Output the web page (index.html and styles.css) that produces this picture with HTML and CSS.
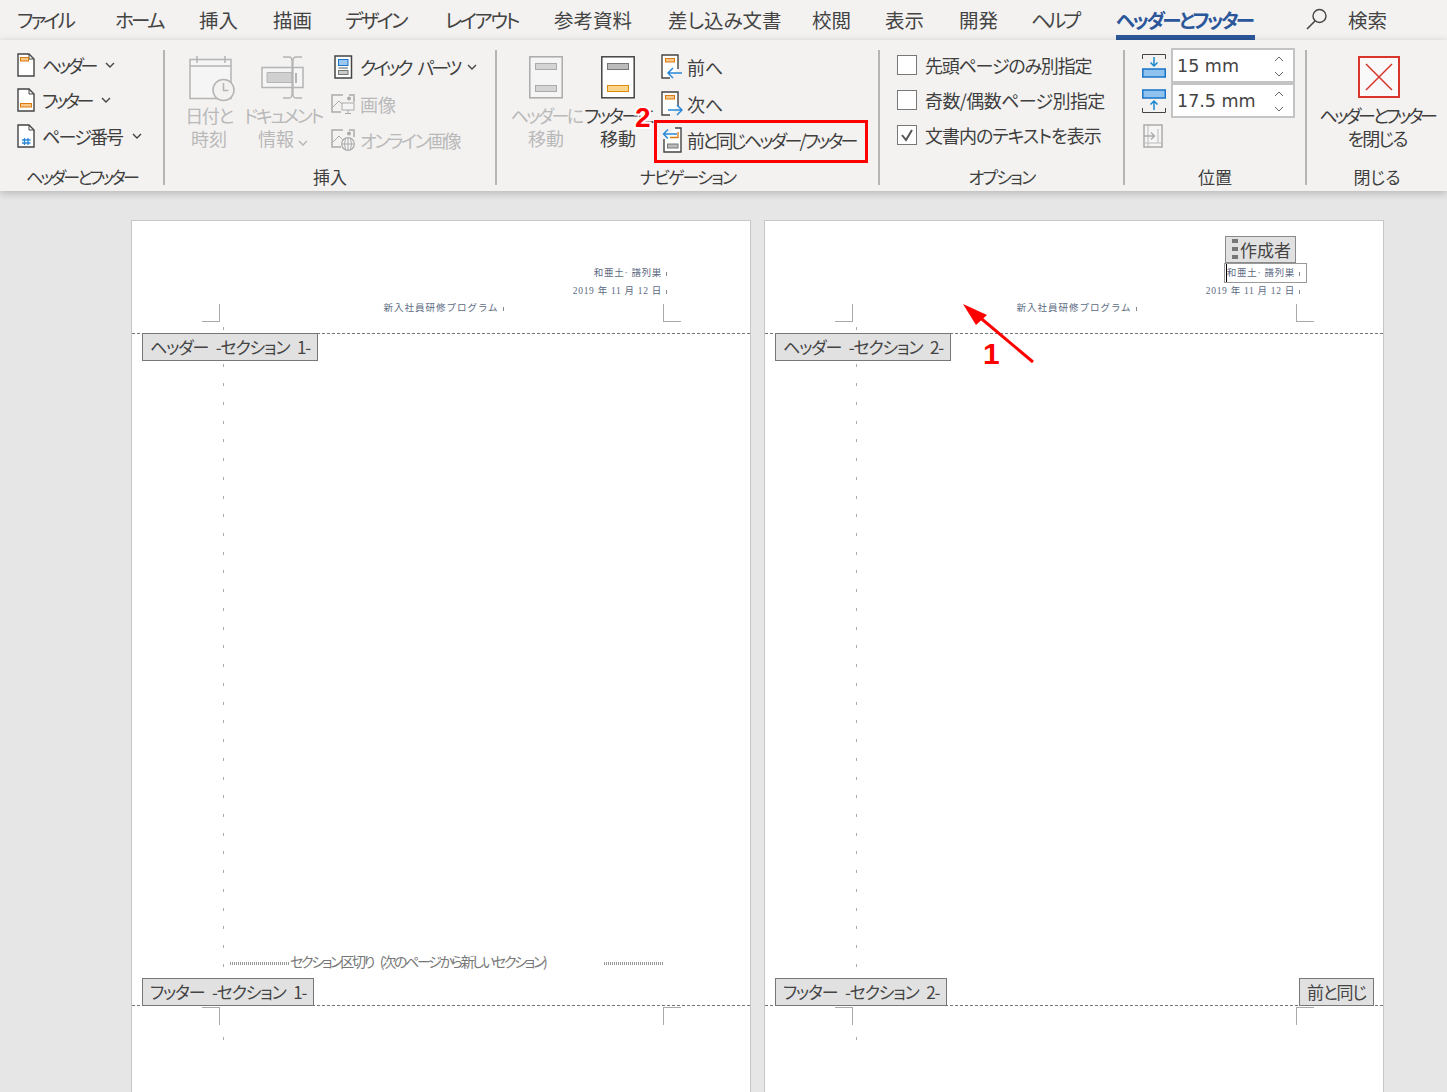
FILE: index.html
```html
<!DOCTYPE html>
<html lang="ja">
<head>
  <meta charset="UTF-8">
  <title>ヘッダーとフッター</title>
  <link rel="stylesheet" href="styles.css">
</head>
<body>
  <!-- タブ -->
  <nav class="tabs">
    <a class="tab ls-29">ファイル</a>
    <a class="tab ls-27">ホーム</a>
    <a class="tab">挿入</a>
    <a class="tab">描画</a>
    <a class="tab ls-27">デザイン</a>
    <a class="tab ls-24">レイアウト</a>
    <a class="tab">参考資料</a>
    <a class="tab">差し込み文書</a>
    <a class="tab">校閲</a>
    <a class="tab">表示</a>
    <a class="tab">開発</a>
    <a class="tab ls-29">ヘルプ</a>
    <a class="tab active ls-26">ヘッダーとフッター</a>
    <a class="search">
      <svg width="22" height="24" viewBox="0 0 22 24"><circle cx="13.5" cy="9" r="6.5" fill="none" stroke="#444" stroke-width="1.4"/><path d="M9 14 1 22" stroke="#444" stroke-width="1.6"/></svg>
      <span>検索</span>
    </a>
  </nav>

  <!-- リボン -->
  <section class="ribbon">
    <div class="group">
      <div class="group-body pad-first">
        <div class="small-col col-hf">
          <div class="small-row">
            <svg class="ico" width="18" height="24" viewBox="0 0 18 24"><path d="M1 1h11l5 5v17H1z" fill="#fff" stroke="#444" stroke-width="1.4"/><path d="M12 1v5h5" fill="none" stroke="#444"/><rect x="3.5" y="4.5" width="8" height="3.5" fill="#f8c888" stroke="#dc7a10"/></svg>
            <span class="ls-34">ヘッダー</span>
            <svg class="chev" width="10" height="6" viewBox="0 0 10 6"><path d="M1 1l4 4 4-4" fill="none" stroke="#444" stroke-width="1.4"/></svg>
          </div>
          <div class="small-row">
            <svg class="ico" width="18" height="24" viewBox="0 0 18 24"><path d="M1 1h11l5 5v17H1z" fill="#fff" stroke="#444" stroke-width="1.4"/><path d="M12 1v5h5" fill="none" stroke="#444"/><rect x="3.5" y="15.5" width="11" height="3.5" fill="#f8c888" stroke="#dc7a10"/></svg>
            <span class="ls-34">フッター</span>
            <svg class="chev" width="10" height="6" viewBox="0 0 10 6"><path d="M1 1l4 4 4-4" fill="none" stroke="#444" stroke-width="1.4"/></svg>
          </div>
          <div class="small-row">
            <svg class="ico" width="18" height="24" viewBox="0 0 18 24"><path d="M1 1h11l5 5v17H1z" fill="#fff" stroke="#444" stroke-width="1.4"/><path d="M12 1v5h5" fill="none" stroke="#444"/><path d="M7.5 14v7M11 14v7M5 16h8.5M5 19h8.5" stroke="#2b88d8" stroke-width="1.3" fill="none"/></svg>
            <span class="ls-18">ページ番号</span>
            <svg class="chev" width="10" height="6" viewBox="0 0 10 6"><path d="M1 1l4 4 4-4" fill="none" stroke="#444" stroke-width="1.4"/></svg>
          </div>
        </div>
      </div>
      <div class="group-label ls-29">ヘッダーとフッター</div>
    </div>

    <div class="group">
      <div class="group-body pad-insert">
        <div class="big-btn disabled w-date">
          <svg class="shift-date" width="46" height="46" viewBox="0 0 46 46"><path d="M1 3.500h41v39H1zM1 10h41M8 0v7M36 0v7" fill="#f5f5f5" stroke="#b4b4b4" stroke-width="1.500"/><circle cx="34.500" cy="34" r="10.500" fill="#f3f2f1" stroke="#b4b4b4" stroke-width="1.500"/><path d="M34.500 27v7.500h5" fill="none" stroke="#b4b4b4" stroke-width="1.500"/></svg>
          <div class="big-label"><span class="ls-15">日付と</span><br>時刻</div>
        </div>
        <div class="big-btn disabled w-doc">
          <svg width="44" height="44" viewBox="0 0 44 44"><path d="M1 11.500h41v20H1z" fill="#f5f5f5" stroke="#b4b4b4" stroke-width="1.500"/><path d="M6 16.500h25v10H6z" fill="#d0d0d0" stroke="#b4b4b4"/><path d="M35 17v10" stroke="#b4b4b4" stroke-width="2"/><path d="M22 1h6q3 0 3 4v33q0 4-3 4h-6M41 1h-6q-3 0-3 4v33q0 4 3 4h6" fill="none" stroke="#b4b4b4" stroke-width="1.300"/></svg>
          <div class="big-label"><span class="ls-23">ドキュメント</span><br>情報 <svg class="chev" width="10" height="6" viewBox="0 0 10 6"><path d="M1 1l4 4 4-4" fill="none" stroke="#b4b4b4" stroke-width="1.400"/></svg></div>
        </div>
        <div class="small-col col-insert">
          <div class="small-row">
            <svg class="ico" width="24" height="24" viewBox="0 0 24 24"><rect x="4" y="1" width="16.500" height="22" fill="#fff" stroke="#444" stroke-width="1.500"/><rect x="7.500" y="4.500" width="9.500" height="6" fill="#9cc7ee" stroke="#1a73c8"/><path d="M7.500 13h9.500" stroke="#777" stroke-width="1.200"/><rect x="7.500" y="15.500" width="9.500" height="4" fill="#ccc" stroke="#777"/></svg>
            <span class="ls-30 wide-space">クイック パーツ</span>
            <svg class="chev" width="10" height="6" viewBox="0 0 10 6"><path d="M1 1l4 4 4-4" fill="none" stroke="#444" stroke-width="1.400"/></svg>
          </div>
          <div class="small-row disabled">
            <svg class="ico" width="24" height="20" viewBox="0 0 24 20"><path d="M12 1H1v17h9M18 1h5v7" fill="none" stroke="#aaa" stroke-width="1.500"/><path d="M2 13l6-6 4 4" fill="none" stroke="#aaa"/><circle cx="18" cy="4.500" r="2" fill="#aaa"/><rect x="11" y="9" width="12" height="7" fill="#f5f5f5" stroke="#aaa"/><path d="M17 16v3M14 19.500h6" stroke="#aaa"/></svg>
            <span>画像</span>
          </div>
          <div class="small-row disabled">
            <svg class="ico" width="24" height="22" viewBox="0 0 24 22"><path d="M12 1H1v17h9M18 1h5v7" fill="none" stroke="#aaa" stroke-width="1.500"/><path d="M2 13l6-6 4 4" fill="none" stroke="#aaa"/><circle cx="18" cy="4.500" r="2" fill="#aaa"/><circle cx="17" cy="15" r="6.300" fill="#f5f5f5" stroke="#aaa" stroke-width="1.200"/><path d="M11 15h12M17 9v12M14.500 9.500q-1.800 5.500 0 11M19.500 9.500q1.800 5.500 0 11" fill="none" stroke="#aaa"/></svg>
            <span class="ls-24">オンライン画像</span>
          </div>
        </div>
      </div>
      <div class="group-label">挿入</div>
    </div>

    <div class="group">
      <div class="group-body pad-nav">
        <div class="big-btn disabled w-move">
          <svg width="34" height="44" viewBox="0 0 34 44"><rect x=".8" y=".8" width="32.400" height="41" fill="#f5f5f5" stroke="#aaa" stroke-width="1.500"/><rect x="6.500" y="7.500" width="21" height="6" fill="#d4d4d4" stroke="#aaa"/><rect x="6.500" y="29.500" width="21" height="6" fill="#d4d4d4" stroke="#aaa"/></svg>
          <div class="big-label"><span class="ls-26">ヘッダーに</span><br>移動</div>
        </div>
        <div class="big-btn w-move2">
          <svg width="34" height="44" viewBox="0 0 34 44"><rect x=".8" y=".8" width="32.400" height="41" fill="#fff" stroke="#444" stroke-width="1.500"/><rect x="6.500" y="7.500" width="21" height="6" fill="#bbb" stroke="#777"/><rect x="6.500" y="29.500" width="21" height="6" fill="#fbd58c" stroke="#e08a10"/></svg>
          <div class="big-label"><span class="ls-24">フッターに</span><br>移動</div>
        </div>
        <div class="small-col col-nav">
          <div class="small-row">
            <svg class="ico" width="22" height="26" viewBox="0 0 22 26"><path d="M9 24H1V1h16v14" fill="#fff" stroke="#444" stroke-width="1.400"/><rect x="4.500" y="4.500" width="9" height="3.500" fill="#f8c888" stroke="#dc7a10"/><path d="M21 19H7M12 14l-5 5 5 5" fill="none" stroke="#2b88d8" stroke-width="1.500"/></svg>
            <span>前へ</span>
          </div>
          <div class="small-row">
            <svg class="ico" width="22" height="26" viewBox="0 0 22 26"><path d="M9 24H1V1h16v14" fill="#fff" stroke="#444" stroke-width="1.400"/><rect x="4.500" y="4.500" width="9" height="3.500" fill="#f8c888" stroke="#dc7a10"/><path d="M7 19h14M16 14l5 5-5 5" fill="none" stroke="#2b88d8" stroke-width="1.500"/></svg>
            <span>次へ</span>
          </div>
          <div class="small-row">
            <svg class="ico" width="22" height="26" viewBox="0 0 22 26"><path d="M3 12v13h17V1h-6" fill="#fff" stroke="#444" stroke-width="1.400"/><path d="M16 7H3M7 2.500 2.500 7 7 11.500" fill="none" stroke="#2b88d8" stroke-width="1.500"/><path d="M9 10.500h8V5" fill="none" stroke="#dc7a10" stroke-width="1.300"/><rect x="6.500" y="17" width="10.500" height="4" fill="#bbb" stroke="#777"/></svg>
            <span class="ls-27">前と同じヘッダー/フッター</span>
          </div>
        </div>
      </div>
      <div class="group-label ls-18">ナビゲーション</div>
    </div>

    <div class="group">
      <div class="group-body pad-opt">
        <div class="small-col col-opt">
          <label class="check-row"><span class="check"></span><span class="ls-12">先頭ページのみ別指定</span></label>
          <label class="check-row"><span class="check"></span><span class="ls-06">奇数/偶数ページ別指定</span></label>
          <label class="check-row"><span class="check"><svg width="18" height="18" viewBox="0 0 18 18"><path d="M4 9l4 5 6-10" fill="none" stroke="#555" stroke-width="2"/></svg></span><span class="ls-10">文書内のテキストを表示</span></label>
        </div>
      </div>
      <div class="group-label ls-18">オプション</div>
    </div>

    <div class="group">
      <div class="group-body pad-pos">
        <div class="pos-grid">
          <svg width="24" height="24" viewBox="0 0 24 24"><path d="M.5 5V.5h23V5" fill="none" stroke="#444"/><path d="M12 3v9M8.500 8.500 12 12l3.500-3.500" fill="none" stroke="#1a86d0" stroke-width="1.500"/><rect x=".8" y="15" width="22.500" height="8" fill="#8fc2ee" stroke="#1a73c8" stroke-width="1.500"/></svg>
          <div class="spin"><span>15 mm</span><div class="spin-btns"><svg width="10" height="6" viewBox="0 0 10 6"><path d="M1 5l4-4 4 4" fill="none" stroke="#666"/></svg><svg width="10" height="6" viewBox="0 0 10 6"><path d="M1 1l4 4 4-4" fill="none" stroke="#666"/></svg></div></div>
          <svg width="24" height="24" viewBox="0 0 24 24"><rect x=".8" y="1" width="22.500" height="8" fill="#8fc2ee" stroke="#1a73c8" stroke-width="1.500"/><path d="M12 21v-9M8.500 15.500 12 12l3.500 3.500" fill="none" stroke="#1a86d0" stroke-width="1.500"/><path d="M.5 19v4.500h23V19" fill="none" stroke="#444"/></svg>
          <div class="spin"><span>17.5 mm</span><div class="spin-btns"><svg width="10" height="6" viewBox="0 0 10 6"><path d="M1 5l4-4 4 4" fill="none" stroke="#666"/></svg><svg width="10" height="6" viewBox="0 0 10 6"><path d="M1 1l4 4 4-4" fill="none" stroke="#666"/></svg></div></div>
          <svg class="align-ico" width="20" height="24" viewBox="0 0 20 24"><rect x="1" y="1" width="18" height="22" fill="#f5f5f5" stroke="#aaa" stroke-width="1.500"/><path d="M5 1v22M1 19h18M15 5v14" stroke="#bbb" fill="none"/><path d="M1 12h10M8 8.500l3.500 3.500L8 15.500" fill="none" stroke="#aaa" stroke-width="1.300"/></svg>
        </div>
      </div>
      <div class="group-label">位置</div>
    </div>

    <div class="group last">
      <div class="group-body">
        <div class="big-btn w-close">
          <svg class="shift-close" width="42" height="44" viewBox="0 0 42 44"><rect x="1" y="1" width="40" height="40" fill="#f9f9f9" stroke="#d9352a" stroke-width="2"/><path d="M8 8l26 26M34 8 8 34" stroke="#d9352a" stroke-width="1.500"/></svg>
          <div class="big-label"><span class="ls-33">ヘッダーとフッター</span><br><span class="ls-18">を閉じる</span></div>
        </div>
      </div>
      <div class="group-label">閉じる</div>
    </div>
  </section>

  <!-- 文書 -->
  <main class="canvas">
    <article class="page">
      <div class="page-head">
        <p class="doc-line right">和亜土· 譜列巣</p>
        <p class="doc-line right">2019 年 11 月 12 日</p>
        <p class="doc-line center">新入社員研修プログラム</p>
      </div>
      <div class="page-body">
        <div class="tag">ヘッダー -セクション 1-</div>
        <div class="break-row">
          <i class="dots"></i>
          <span>セクション区切り (次のページから新しいセクション)</span>
          <i class="dots"></i>
        </div>
        <div class="foot-tags">
          <div class="tag">フッター -セクション 1-</div>
        </div>
      </div>
      <i class="para-marks"></i>
      <i class="para-mark-foot"></i>
      <i class="crop tl"></i><i class="crop tr"></i><i class="crop bl"></i><i class="crop br"></i>
    </article>

    <article class="page">
      <div class="page-head">
        <p class="doc-line right boxed"><span class="author-box"><span class="caret">和亜土· 譜列巣</span></span></p>
        <p class="doc-line right">2019 年 11 月 12 日</p>
        <p class="doc-line center">新入社員研修プログラム</p>
      </div>
      <div class="page-body">
        <div class="tag">ヘッダー -セクション 2-</div>
        <div class="foot-tags">
          <div class="tag">フッター -セクション 2-</div>
          <div class="tag">前と同じ</div>
        </div>
      </div>
      <div class="author-tag"><i class="grip"></i>作成者</div>
      <i class="para-marks"></i>
      <i class="para-mark-foot"></i>
      <i class="crop tl"></i><i class="crop tr"></i><i class="crop bl"></i><i class="crop br"></i>
    </article>
  </main>

  <!-- 注釈 -->
  <div class="red-box"></div>
  <div class="num num-two">2</div>
  <div class="num num-one">1</div>
  <svg class="arrow" width="80" height="66" viewBox="0 0 80 66"><path d="M70 58 14 11" stroke="#f00" stroke-width="3"/><path d="M0 0 24 11 13 21z" fill="#f00"/></svg>
</body>
</html>
```

FILE: styles.css
```css
/* Reset */
* {
  margin: 0;
  padding: 0;
  box-sizing: border-box;
}

html, body {
  height: 1092px;
  overflow: hidden;
}

body {
  position: relative;
  display: flex;
  flex-direction: column;
  font-family: "Noto Sans CJK JP", sans-serif;
  font-feature-settings: "palt";
  font-size: 18px;
  color: #3f3f3f;
  background-color: #e6e6e6;
}

/* Kana in the original UI font is much narrower */
.ls-06 { letter-spacing: -0.6px; }
.ls-10 { letter-spacing: -1px; }
.ls-12 { letter-spacing: -1.2px; }
.ls-15 { letter-spacing: -1.5px; }
.ls-18 { letter-spacing: -1.8px; }
.ls-23 { letter-spacing: -2.3px; }
.ls-24 { letter-spacing: -2.4px; }
.ls-26 { letter-spacing: -2.6px; }
.ls-27 { letter-spacing: -2.7px; }
.ls-29 { letter-spacing: -2.9px; }
.ls-30 { letter-spacing: -3px; }
.ls-33 { letter-spacing: -3.3px; }
.ls-34 { letter-spacing: -3.4px; }

.wide-space { word-spacing: 6px; }

/* Tabs */
.tabs {
  display: grid;
  grid-template-columns: 98px 84px 74px 72px 100px 109px 114px 144px 73px 74px 72px 85px 139px auto;
  justify-content: start;
  height: 40px;
  padding-left: 17px;
  background-color: #f3f2f1;
}

.tab {
  font-size: 19.500px;
  line-height: 40px;
  white-space: nowrap;
  color: #444;
}

.tab.active {
  font-weight: 700;
  color: #2b579a;
  box-shadow: inset 0 -5px 0 #2b579a;
}

.search {
  display: flex;
  align-items: center;
  gap: 20px;
  margin-left: 51px;
  padding-bottom: 2px;
  font-size: 19.500px;
  color: #444;
}

/* Ribbon */
.ribbon {
  display: grid;
  grid-template-columns: 165px 332px 383px 245px 182px 140px;
  height: 151px;
  padding-top: 10px;
  background-color: #f3f2f1;
  box-shadow: 0 2px 8px rgba(0, 0, 0, 0.22);
  position: relative;
  z-index: 1;
}

.group {
  display: flex;
  flex-direction: column;
  height: 135px;
  border-right: 2px solid #b7b5b3;
}

.group.last {
  border-right: none;
}

.group-body {
  display: flex;
  flex: 1;
  min-height: 0;
}

.group-label {
  height: 24px;
  margin-bottom: -4px;
  font-size: 17px;
  line-height: 24px;
  text-align: center;
  white-space: nowrap;
}

.pad-first { padding-left: 17px; }
.pad-insert { padding-left: 14px; }
.pad-nav { padding-left: 9px; }
.pad-opt { padding-left: 17px; }
.pad-pos { padding-left: 17px; }

.disabled {
  color: #b9b9b9;
}

.big-btn {
  display: flex;
  flex-direction: column;
  align-items: center;
  flex: none;
  padding-top: 6px;
  font-size: 18px;
  line-height: 23px;
  text-align: center;
  white-space: nowrap;
}

.big-label {
  margin-top: 4px;
}

.shift-date {
  margin: 0 -3px -2px 3px;
}

.shift-close {
  margin-left: 3px;
}

.w-date { width: 60px; }
.w-doc { width: 84px; margin-left: 2px; }
.w-move { width: 80px; }
.w-move2 { width: 64px; }
.w-close { width: 140px; }

.small-col {
  display: flex;
  flex-direction: column;
}

.col-hf { margin-top: -3px; }
.col-insert { margin-left: 6px; margin-top: -1px; }
.col-nav { margin-left: 11px; margin-top: -1px; }
.col-opt { margin-top: -3px; }

.small-row {
  display: flex;
  align-items: center;
  height: 36.500px;
  white-space: nowrap;
  font-size: 18px;
}

.col-hf .small-row { height: 35.5px; gap: 7px; }
.col-insert .small-row { gap: 5px; }
.col-nav .small-row { gap: 4px; }

.chev {
  flex: none;
}

.small-row .chev {
  margin-left: 3px;
}

.ico {
  flex: none;
}

.check-row {
  display: flex;
  align-items: center;
  gap: 8px;
  height: 35px;
  white-space: nowrap;
}

.check {
  display: flex;
  align-items: center;
  justify-content: center;
  width: 20px;
  height: 20px;
  border: 1px solid #777;
  background-color: #fff;
}

.pos-grid {
  display: grid;
  grid-template-columns: 24px 124px;
  grid-auto-rows: 35px;
  column-gap: 5px;
  align-items: center;
  margin-top: -2px;
}

.spin {
  display: flex;
  align-items: center;
  justify-content: space-between;
  height: 35px;
  padding: 1px 9px 0 4px;
  border: 2px solid #c4c4c4;
  background-color: #fff;
  font-family: "DejaVu Sans", sans-serif;
  font-size: 17.5px;
  color: #444;
}

.spin-btns {
  display: flex;
  flex-direction: column;
  gap: 9px;
}

.align-ico {
  margin-left: 1px;
}

/* Document */
.canvas {
  display: flex;
  flex: 1;
  gap: 13px;
  padding: 29px 0 0 131px;
  min-height: 0;
}

.page {
  position: relative;
  width: 620px;
  background-color: #fff;
  border: 1px solid #c6c6c6;
  border-bottom: none;
}

.page-head {
  height: 113px;
  padding: 44px 83px 0 88px;
  border-bottom: 1px dashed #777;
}

.doc-line {
  height: 17.500px;
  font-family: "Liberation Serif", "Noto Sans CJK JP", serif;
  font-feature-settings: normal;
  font-size: 9.500px;
  letter-spacing: 0.7px;
  line-height: 17.500px;
  color: #5b6a82;
  white-space: nowrap;
}

.doc-line.center {
  letter-spacing: 1px;
  text-align: center;
}

.doc-line::after,
.caret::after {
  content: "";
  display: inline-block;
  width: 2px;
  height: 4px;
  margin-left: 2px;
  border-right: 1px solid #888;
}

.doc-line.right {
  text-align: right;
}

.doc-line.boxed::after {
  display: none;
}

.author-box {
  display: inline-block;
  height: 20px;
  margin: -2px -7px 0 0;
  padding: 0 6px 0 1px;
  border: 1px solid #999;
  line-height: 18px;
  vertical-align: top;
  background-color: #fff;
}

.caret {
  display: inline-block;
  height: 18px;
  border-left: 1.500px solid #000;
}

.page-body {
  display: flex;
  flex-direction: column;
  align-items: flex-start;
  height: 672px;
  padding: 0 9px 0 10px;
  border-bottom: 1px dashed #777;
}

.tag {
  position: relative;
  z-index: 1;
  height: 28px;
  padding: 0 7px;
  border: 1px solid #777;
  background-color: #e1e1e1;
  font-size: 17px;
  letter-spacing: -1.2px;
  word-spacing: 5px;
  line-height: 26px;
  white-space: nowrap;
  color: #444;
}

.page-body > .tag {
  margin-top: -1px;
}

.break-row {
  display: flex;
  align-items: center;
  width: 433px;
  margin: auto 0 0 88px;
  font-size: 14px;
  letter-spacing: -2.3px;
  word-spacing: 6px;
  line-height: 20px;
  color: #777;
}

.break-row span {
  margin-left: 1px;
  white-space: nowrap;
}

.dots {
  width: 59px;
  height: 3px;
  margin-top: 4px;
  background: repeating-linear-gradient(to right, #999 0 1px, transparent 1px 2px);
}

.break-row .dots:last-child {
  margin-left: auto;
}

.foot-tags {
  display: flex;
  justify-content: space-between;
  align-self: stretch;
  margin-top: 7px;
  margin-bottom: -1px;
}

.page-body > .foot-tags:nth-child(2) {
  margin-top: auto;
}

.para-marks {
  position: absolute;
  left: 91px;
  top: 106px;
  width: 1px;
  height: 640px;
  background: repeating-linear-gradient(to bottom, #aaa 0 3px, transparent 3px 18.730px);
}

.para-mark-foot {
  position: absolute;
  left: 91px;
  top: 816px;
  width: 1px;
  height: 3px;
  background-color: #aaa;
}

.crop {
  position: absolute;
  width: 18px;
  height: 18px;
  border: 0 solid #aaa;
}

.crop.tl { left: 70px; top: 83px; border-width: 0 1px 1px 0; }
.crop.tr { left: 531px; top: 83px; border-width: 0 0 1px 1px; }
.crop.bl { left: 70px; top: 786px; border-width: 1px 1px 0 0; }
.crop.br { left: 531px; top: 786px; border-width: 1px 0 0 1px; }

.author-tag {
  position: absolute;
  left: 460px;
  top: 15px;
  display: flex;
  align-items: center;
  gap: 2px;
  width: 71px;
  height: 27px;
  padding: 0 0 1px 6px;
  border: 1px solid #8a8a8a;
  background-color: #e1e1e1;
  font-size: 17px;
  color: #444;
}

.grip {
  width: 6px;
  height: 20px;
  background: repeating-linear-gradient(to bottom, #777 0 4px, transparent 4px 8px);
}

/* Annotations */
.red-box {
  position: absolute;
  left: 654px;
  top: 120px;
  z-index: 2;
  width: 214px;
  height: 43px;
  border: 3px solid #f00;
}

.num {
  position: absolute;
  z-index: 3;
  font-family: "Liberation Sans", sans-serif;
  font-weight: 700;
  line-height: 1;
  color: #f00;
}

.num-two {
  left: 635px;
  top: 104px;
  font-size: 28px;
  -webkit-text-stroke: 4px #fff;
  paint-order: stroke fill;
}

.num-one {
  left: 983px;
  top: 339px;
  font-size: 30px;
}

.arrow {
  position: absolute;
  left: 963px;
  top: 304px;
  z-index: 3;
}
```
